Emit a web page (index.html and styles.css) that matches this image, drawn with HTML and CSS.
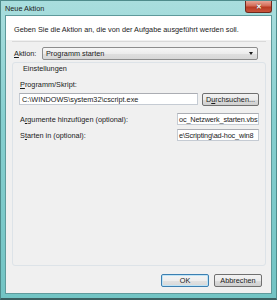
FILE: index.html
```html
<!DOCTYPE html>
<html lang="de">
<head>
    <meta charset="UTF-8">
    <title>Neue Aktion</title>
    <link rel="stylesheet" href="styles.css">
</head>
<body>
    <div class="window">
        <div class="titlebar">
            <span class="title">Neue Aktion</span>
            <span class="close">&#x2715;</span>
        </div>

        <div class="client">
            <div class="intro">Geben Sie die Aktion an, die von der Aufgabe ausgeführt werden soll.</div>
            <div class="separator"></div>

            <div class="action-row">
                <label class="action-label"><u>A</u>ktion:</label>
                <div class="combo">
                    <span>Programm starten</span>
                    <span class="combo-arrow"></span>
                </div>
            </div>

            <div class="group">
                <div class="group-title">Einstellungen</div>

                <div class="field-label"><u>P</u>rogramm/Skript:</div>
                <div class="path-row">
                    <div class="textbox wide">C:\WINDOWS\system32\cscript.exe</div>
                    <button class="btn browse">D<u>u</u>rchsuchen...</button>
                </div>

                <div class="inline-row first">
                    <span class="inline-label">A<u>r</u>gumente hinzufügen (optional):</span>
                    <div class="textbox short">oc_Netzwerk_starten.vbs<span class="caret"></span></div>
                </div>
                <div class="inline-row">
                    <span class="inline-label">S<u>t</u>arten in (optional):</span>
                    <div class="textbox short">e\Scripting\ad-hoc_win8</div>
                </div>
            </div>

            <div class="footer">
                <button class="btn default">OK</button>
                <button class="btn">Abbrechen</button>
            </div>
        </div>
    </div>
</body>
</html>
```

FILE: styles.css
```css
* {
    box-sizing: border-box;
    margin: 0;
    padding: 0;
}

body {
    width: 277px;
    height: 300px;
    font-family: 'Liberation Sans', Arial, sans-serif;
    font-size: 7.3px;
    line-height: 9px;
    color: #1a1a1a;
    background: #ffffff;
}

.window {
    width: 277px;
    height: 300px;
    display: flex;
    flex-direction: column;
    background: linear-gradient(180deg, #a9dede 0%, #86cfcf 40%, #72c4c4 100%);
    border: 1px solid #4f8c8c;
    border-bottom: 2px solid #3b5f60;
    padding: 0 4px 4px 4px;
}

.titlebar {
    height: 14px;
    display: flex;
    align-items: flex-start;
    justify-content: space-between;
}

.title {
    padding: 3px 0 0 0;
    color: #1c1c1c;
}

.close {
    width: 27px;
    height: 12px;
    display: flex;
    align-items: center;
    justify-content: center;
    font-size: 7px;
    font-weight: bold;
    color: #ffffff;
    background: linear-gradient(180deg, #e8a597 0%, #d36a55 45%, #b83a22 55%, #c9553c 100%);
    border: 1px solid #6e2a1e;
    border-top: none;
    border-radius: 0 0 3px 3px;
    text-shadow: 0 0 1px #3a0d05;
}

.client {
    flex: 1;
    display: flex;
    flex-direction: column;
    background: #f0f0f0;
    border: 1px solid #5e9a9b;
}

.intro {
    height: 24px;
    padding: 9px 0 0 8px;
    background: #ffffff;
}

.separator {
    height: 1px;
    margin: 1px 5px 0 6px;
    background: #d9d9d9;
}

.action-row {
    display: flex;
    align-items: center;
    margin-top: 5px;
    padding: 0 13px 0 8px;
}

.action-label {
    width: 28px;
}

.combo {
    flex: 1;
    height: 13px;
    display: flex;
    align-items: center;
    justify-content: space-between;
    padding: 0 4px 0 3px;
    border: 1px solid #8c8c8c;
    border-radius: 2px;
    background: linear-gradient(180deg, #f6f6f6 0%, #ececec 50%, #dfdfdf 51%, #d7d7d7 100%);
}

.combo-arrow {
    width: 0;
    height: 0;
    border-left: 2px solid transparent;
    border-right: 2px solid transparent;
    border-top: 3px solid #1a1a1a;
}

.group {
    height: 204px;
    margin: 2px 5px 0 6px;
    padding: 1px 6px 0 6px;
    border: 1px solid #dde3e8;
    border-radius: 3px;
    display: flex;
    flex-direction: column;
}

.group-title {
    padding-left: 4px;
}

.field-label {
    margin-top: 7px;
    padding-left: 1px;
}

.path-row {
    display: flex;
    gap: 4px;
    margin-top: 4px;
}

.textbox {
    height: 12px;
    padding: 0 2px;
    background: #ffffff;
    border: 1px solid #c5cbd3;
    border-top-color: #abadb3;
    white-space: nowrap;
    overflow: hidden;
    display: flex;
    align-items: center;
}

.textbox.wide {
    flex: 1;
}

.textbox.short {
    width: 82px;
    padding: 0 1px;
    letter-spacing: -0.15px;
}

.caret {
    width: 1px;
    height: 8px;
    margin-left: 1px;
    background: #1a1a1a;
}

.btn {
    font-family: inherit;
    font-size: 7.3px;
    color: #1a1a1a;
    height: 13px;
    border: 1px solid #707070;
    border-radius: 2px;
    background: linear-gradient(180deg, #f2f2f2 0%, #ebebeb 50%, #dddddd 51%, #cfcfcf 100%);
    display: flex;
    align-items: center;
    justify-content: center;
}

.browse {
    width: 57px;
}

.inline-row {
    display: flex;
    align-items: center;
    justify-content: space-between;
    margin-top: 4px;
    padding-left: 1px;
}

.inline-row.first {
    margin-top: 7px;
}

.footer {
    display: flex;
    justify-content: flex-end;
    gap: 5px;
    margin-top: 8px;
    padding-right: 9px;
}

.footer .btn {
    width: 48px;
}

.btn.default {
    border-color: #3c7fb1;
    box-shadow: inset 0 0 0 1px #bfe4f6;
    background: linear-gradient(180deg, #f4f4f4 0%, #eeeeee 50%, #e2e2e2 51%, #d8d8d8 100%);
}
```
